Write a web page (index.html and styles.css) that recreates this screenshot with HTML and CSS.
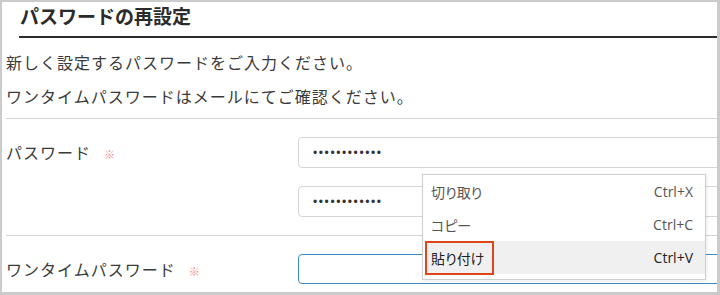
FILE: index.html
```html
<!DOCTYPE html>
<html lang="ja">
  <head>
    <meta charset="UTF-8" />
    <meta name="viewport" content="width=device-width, initial-scale=1.0" />
    <title>パスワードの再設定</title>
    <link rel="stylesheet" href="styles.css">
  </head>
  <body>
    <main class="frame">
      <h1 class="title">パスワードの再設定</h1>
      <div class="lead">
        <p>新しく設定するパスワードをご入力ください。</p>
        <p>ワンタイムパスワードはメールにてご確認ください。</p>
      </div>
      <!-- パスワード -->
      <div class="row">
        <label class="label">パスワード<span class="required">※</span></label>
        <div class="fields">
          <input class="field" type="password" value="passwordpass">
          <input class="field" type="password" value="passwordpass">
        </div>
      </div>
      <!-- ワンタイムパスワード -->
      <div class="row">
        <label class="label">ワンタイムパスワード<span class="required">※</span></label>
        <div class="fields">
          <input class="field focused" type="text" value="">
        </div>
      </div>
      <!-- 右クリックメニュー -->
      <ul class="menu">
        <li class="menuItem"><span>切り取り</span><span class="key">Ctrl+X</span></li>
        <li class="menuItem"><span>コピー</span><span class="key">Ctrl+C</span></li>
        <li class="menuItem active"><span class="mark">貼り付け</span><span class="key">Ctrl+V</span></li>
      </ul>
    </main>
  </body>
</html>
```

FILE: styles.css
```css
body {
  margin: 0;
  padding: 0;
  background: #fff;
}

.frame {
  position: relative;
  box-sizing: border-box;
  width: 720px;
  height: 295px;
  border: solid #cbcbcb;
  border-width: 2px 3px 3px 2px;
  overflow: hidden;
  font-family: "Noto Sans CJK JP", sans-serif;
  color: #3a3a3a;
}

.title {
  margin: 0 0 0 17px;
  padding: 0 0 6px 1px;
  font-size: 19px;
  font-weight: bold;
  line-height: 28px;
  color: #2b2b2b;
  border-bottom: 2px solid #2b2b2b;
}

.lead {
  margin: 7px 0 0 4px;
  padding-bottom: 5px;
  border-bottom: 1px solid #d4d4d4;
}

.lead p {
  margin: 0;
  font-size: 16px;
  line-height: 34px;
  letter-spacing: 1px;
}

.row {
  display: grid;
  grid-template-columns: 292px 1fr;
  margin-left: 4px;
  padding: 18px 0;
  border-bottom: 1px solid #d4d4d4;
}

.row:last-of-type {
  border-bottom: none;
}

.label {
  font-size: 16px;
  line-height: 31px;
  letter-spacing: 1px;
}

.required {
  margin-left: 13px;
  font-size: 11px;
  color: #f08c8c;
}

.fields {
  display: flex;
  flex-direction: column;
  gap: 18px;
}

.field {
  box-sizing: border-box;
  width: 500px;
  height: 31px;
  padding: 0 14px;
  border: 1px solid #d6d6d6;
  border-radius: 4px;
  font-family: "Liberation Sans", sans-serif;
  font-size: 12px;
  letter-spacing: 1.6px;
  color: #333;
  outline: none;
}

.focused {
  height: 30px;
  border-color: #3a88c6;
}

.menu {
  position: absolute;
  left: 420px;
  top: 172px;
  width: 280px;
  margin: 0;
  padding: 0 0 5px 2px;
  list-style: none;
  background: #fff;
  border: 1px solid #cfcfcf;
  box-shadow: 1px 1px 3px rgba(0, 0, 0, 0.08);
}

.menuItem {
  display: flex;
  justify-content: space-between;
  align-items: center;
  height: 33px;
  padding: 0 12px 0 6px;
  font-size: 14px;
  font-feature-settings: "palt";
  color: #555;
}

.menuItem.active {
  background: #f0f0f0;
  color: #222;
}

.key {
  font-family: "Open Sans", sans-serif;
  font-size: 14px;
}

.mark {
  position: relative;
}

.mark:after {
  content: "";
  position: absolute;
  left: -6px;
  right: -10px;
  top: -7px;
  bottom: -7px;
  border: 2px solid #dd4618;
}
```
